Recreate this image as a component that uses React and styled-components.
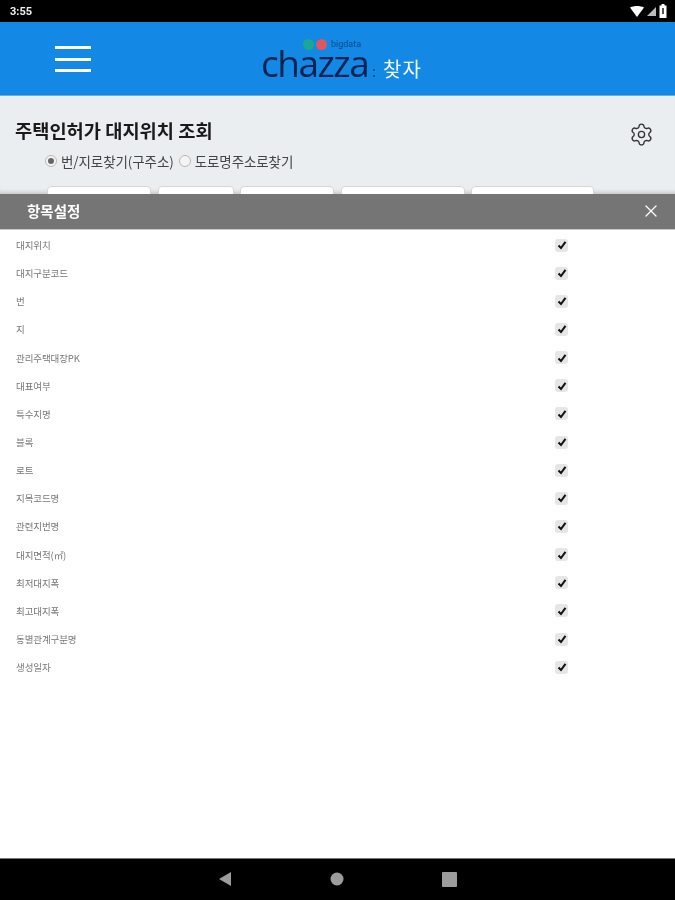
import React from "react";
import styled, { createGlobalStyle } from "styled-components";
import { Settings, X } from "lucide-react";

const Global = createGlobalStyle`
  html, body { margin: 0; padding: 0; background: #fff; }
  body { font-family: "Noto Sans CJK KR", "Noto Sans", sans-serif; }
`;
const Page = styled.div`
  width: 675px; height: 900px; display: flex; flex-direction: column; overflow: hidden;
  filter: blur(0.5px);
`;
const StatusBar = styled.div`
  height: 22px; flex: none; background: #000; color: #eee; display: flex; align-items: center;
  justify-content: space-between; padding: 0 8px 0 10px; font: 700 11px "Roboto", sans-serif;
`;
const StatusIcons = styled.div`display: flex; align-items: center; gap: 3px;`;
const Header = styled.header`
  height: 74px; flex: none; background: #1388e5; display: grid; grid-template-columns: 55px 36px 170px 1fr; align-items: center;
  border-bottom: 1px solid #62aeea; box-sizing: border-box;
`;
const Burger = styled.div`
  grid-column: 2; width: 36px; height: 26px; display: flex; flex-direction: column; justify-content: space-between;
  span { display: block; height: 3px; background: #fff; }
`;
const Logo = styled.div`
  grid-column: 4; display: flex; align-items: baseline; position: relative; height: 74px; box-sizing: border-box; padding-top: 29px;
`;
const Word = styled.span`
  font: 500 37px/24px "Open Sans", sans-serif; letter-spacing: -1.5px; color: #0a2350; display: inline-block; width: 106px;
`;
const Colon = styled.span`font: 400 15px/16px "Noto Sans", sans-serif; color: #0d3f78; margin: 0 7px 0 5px;`;
const Kor = styled.span`font: 400 20px/24px "Noto Sans CJK KR", sans-serif; color: #f2f8ff; letter-spacing: 1px;`;
const Badge = styled.div`
  position: absolute; left: 42px; top: 17px; display: flex; align-items: center; gap: 1px;
  font: 400 9px/11px "Roboto", sans-serif; color: #0d4a8c;
`;
const Dot = styled.i`
  width: 11px; height: 11px; border-radius: 50%; background: ${p => p.$c}; display: block; margin-right: 1px;
`;
const BadgeText = styled.span`margin-left: 2px;`;
const Content = styled.section`
  height: 98px; flex: none; background: #ebeef1; overflow: hidden; box-sizing: border-box; padding: 21px 21px 0 15px;
  box-shadow: inset 0 -5px 5px -4px rgba(0,0,0,.22);
`;
const TitleRow = styled.div`display: flex; justify-content: space-between; align-items: center; height: 26px;`;
const Title = styled.h1`margin: 0; font: 700 18.7px/26px "Noto Sans CJK KR", sans-serif; color: #1a1a1a; letter-spacing: 0;`;
const Gear = styled(Settings)`margin-top: 9px; color: #333;`;
const Radios = styled.div`
  display: flex; align-items: center; margin: 7px 0 0 30px; height: 22px; font: 400 13.5px "Noto Sans CJK KR", sans-serif; color: #444; letter-spacing: -0.1px;
`;
const Radio = styled.i`
  width: 12px; height: 12px; border-radius: 50%; border: 1px solid #b8b8b8; background: #f4f4f4; box-sizing: border-box;
  display: flex; align-items: center; justify-content: center; margin: 0 4px 0 ${p => p.$ml || 0}px;
  &::after { content: ""; width: 6px; height: 6px; border-radius: 50%; background: ${p => p.$on ? "#666" : "transparent"}; }
`;
const Buttons = styled.div`display: flex; gap: 6.5px; margin: 14px 0 0 32px;`;
const Btn = styled.div`
  width: ${p => p.$w}px; height: 30px; flex: none; background: #fff; border: 1px solid #d6d6d6; border-radius: 4px; box-sizing: border-box;
`;
const DialogBar = styled.div`
  height: 36px; flex: none; background: #757575; display: flex; align-items: center; justify-content: space-between;
  padding: 0 14px 2px 27px; color: #fff; font: 700 14.5px "Noto Sans CJK KR", sans-serif; border-bottom: 1px solid #c9c9c9;
  box-sizing: border-box;
`;
const List = styled.ul`
  list-style: none; margin: 0; padding: 1px 0 0; flex: 1; background: #fff;
`;
const Row = styled.li`
  height: 28.15px; display: flex; align-items: center; justify-content: space-between; padding: 0 107px 0 16px;
  font: 400 9.5px "Noto Sans CJK KR", sans-serif; color: #777; letter-spacing: -0.1px;
`;
const Check = styled.span`
  width: 13px; height: 13px; border-radius: 3px; background: #e6e6e6; display: flex; align-items: center; justify-content: center;
`;
const NavBar = styled.nav`
  height: 42px; flex: none; background: #000; border-top: 1px solid #777; box-sizing: border-box; display: flex; align-items: center; justify-content: center; gap: 98px;
  padding-bottom: 1px;
`;

const labels = ["대지위치","대지구분코드","번","지","관리주택대장PK","대표여부","특수지명","블록","로트","지목코드명","관련지번명","대지면적(㎡)","최저대지폭","최고대지폭","동별관계구분명","생성일자"];

export default function App() {
  return (
    <Page>
      <Global />
      <StatusBar>
        <span>3:55</span>
        <StatusIcons>
          <svg width="14" height="11" viewBox="0 0 14 11"><path d="M0 1.500C4 -.5 10 -.5 14 1.500L7 11Z" fill="#fff" /></svg>
          <svg width="9" height="9" viewBox="0 0 9 9"><path d="M9 0V9H0Z" fill="#bbb" /></svg>
          <svg width="8" height="14" viewBox="0 0 8 14"><path d="M2.500 0H5.500V1.500H7.500V14H.5V1.500H2.500Z" fill="#fff" /><rect x="3" y="4" width="2" height="6" fill="#555" /></svg>
        </StatusIcons>
      </StatusBar>
      <Header>
        <Burger><span /><span /><span /></Burger>
        <Logo>
          <Badge><Dot $c="#1ba893" /><Dot $c="#e0565c" /><BadgeText>bigdata</BadgeText></Badge>
          <Word>chazza</Word>
          <Colon>:</Colon>
          <Kor>찾자</Kor>
        </Logo>
      </Header>
      <Content>
        <TitleRow>
          <Title>주택인허가 대지위치 조회</Title>
          <Gear size={25} strokeWidth={1.3} />
        </TitleRow>
        <Radios>
          <Radio $on />
          <span>번/지로찾기(구주소)</span>
          <Radio $ml={5} />
          <span>도로명주소로찾기</span>
        </Radios>
        <Buttons>
          <Btn $w={104} /><Btn $w={76} /><Btn $w={94} /><Btn $w={124} /><Btn $w={123} />
        </Buttons>
      </Content>
      <DialogBar>
        <span>항목설정</span>
        <X size={20} strokeWidth={1.5} color="#fff" />
      </DialogBar>
      <List>
        {labels.map(l => (
          <Row key={l}>
            <span>{l}</span>
            <Check>
              <svg width="10" height="10" viewBox="0 0 10 10"><path d="M1.500 5.500L4 8L8.500 1.800" fill="none" stroke="#111" strokeWidth="2" /></svg>
            </Check>
          </Row>
        ))}
      </List>
      <NavBar>
        <svg width="14" height="16" viewBox="0 0 14 16"><path d="M13 1V15L1 8Z" fill="#9c9c9c" /></svg>
        <svg width="14" height="14" viewBox="0 0 14 14"><circle cx="7" cy="7" r="6.500" fill="#9c9c9c" /></svg>
        <svg width="15" height="15" viewBox="0 0 15 15"><rect width="15" height="15" rx="1" fill="#9c9c9c" /></svg>
      </NavBar>
    </Page>
  );
}
